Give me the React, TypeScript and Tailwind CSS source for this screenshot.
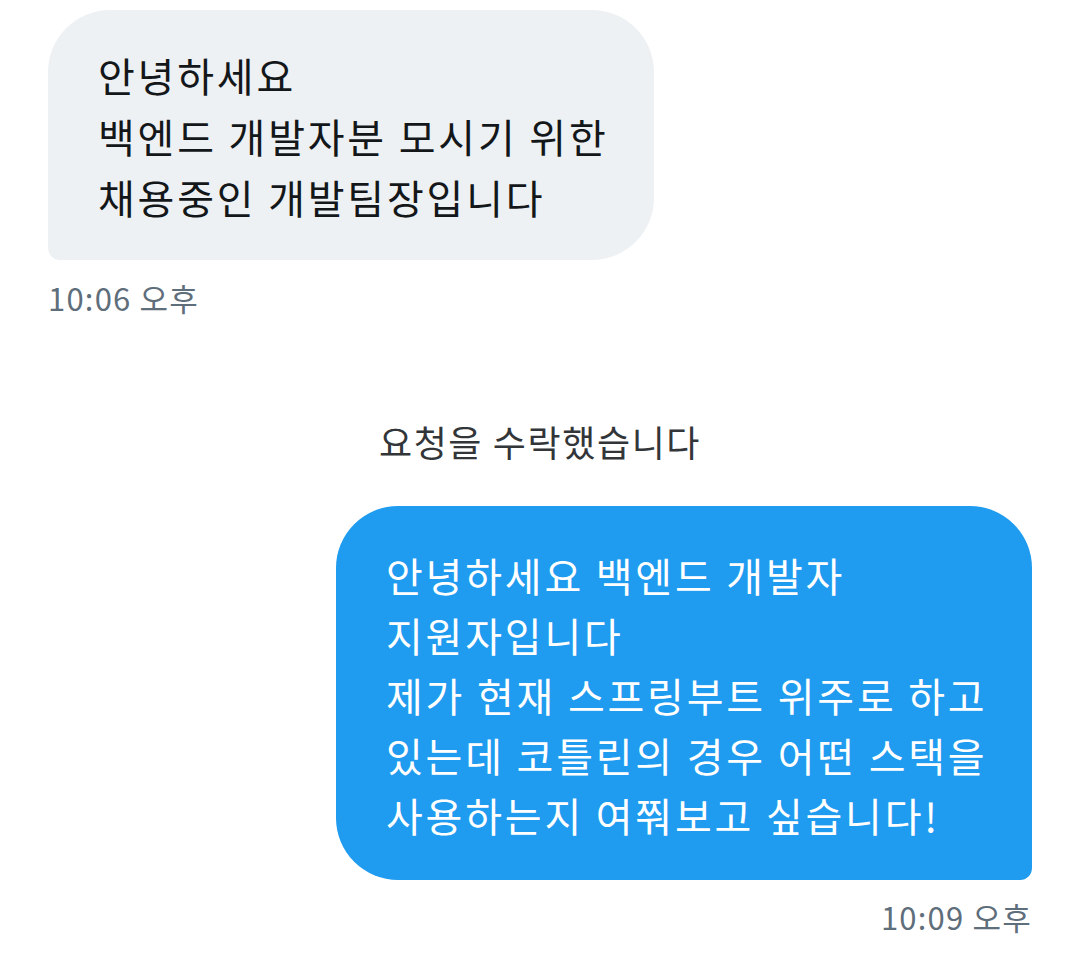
import React from 'react';

const FONT = '"Noto Sans CJK KR", "Noto Sans", Roboto, sans-serif';

interface Message {
  lines: string[];
  time: string;
  mine: boolean;
}

const incoming: Message = {
  lines: ['안녕하세요', '백엔드 개발자분 모시기 위한', '채용중인 개발팀장입니다'],
  time: '10:06 오후',
  mine: false
};

const outgoing: Message = {
  lines: [
    '안녕하세요 백엔드 개발자',
    '지원자입니다',
    '제가 현재 스프링부트 위주로 하고',
    '있는데 코틀린의 경우 어떤 스택을',
    '사용하는지 여쭤보고 싶습니다!'
  ],
  time: '10:09 오후',
  mine: true
};

function Bubble({ message }: { message: Message }) {
  return (
    <div className={`flex flex-col ${message.mine ? 'items-end' : 'items-start'}`}>
      <div
        className={
          message.mine
            ? 'w-[696px] bg-[#1f9bef] text-white rounded-[62px] rounded-br-[12px] pl-[50px] pr-[30px] pt-[39px] pb-[35px]'
            : 'w-[606px] bg-[#eef1f3] text-[#14171a] rounded-[62px] rounded-bl-[12px] pl-[50px] pr-[30px] pt-[35px] pb-[32px]'
        }
      >
        {message.lines.map((line, i) => (
          <div
            key={i}
            className={`text-[40px] tracking-[2.8px] whitespace-nowrap ${message.mine ? 'leading-[60px]' : 'leading-[61px]'}`}
          >
            {line}
          </div>
        ))}
      </div>
      <div className={`text-[31px] leading-[36px] tracking-[1.2px] text-[#5f6e7b] ${message.mine ? 'mt-[19px]' : 'mt-[20px]'}`}>
        {message.time}
      </div>
    </div>
  );
}

export default function App() {
  return (
    <div className="w-[1080px] h-[962px] bg-white overflow-hidden" style={{ fontFamily: FONT }}>
      <div className="pl-[48px] pr-[48px] pt-[10px] flex flex-col">
        <Bubble message={incoming} />

        {/* system notice */}
        <div className="mt-[103px] text-center text-[36px] leading-[44px] tracking-[1.6px] text-[#333639]">
          요청을 수락했습니다
        </div>

        <div className="mt-[43px]">
          <Bubble message={outgoing} />
        </div>
      </div>
    </div>
  );
}
